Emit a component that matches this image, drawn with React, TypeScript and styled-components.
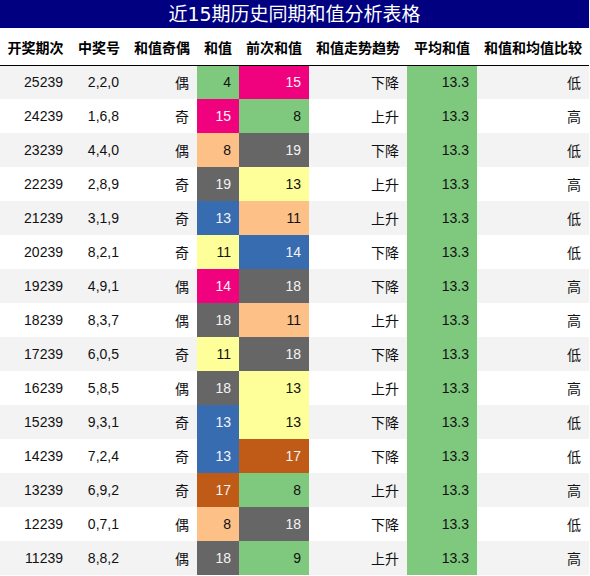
import React from 'react';
import styled, { createGlobalStyle } from 'styled-components';

const palette = {
  green: '#7fc97f',
  pink: '#f0027f',
  peach: '#fdc086',
  yellow: '#ffff99',
  blue: '#386cb0',
  brown: '#bf5b17',
  grey: '#666666',
};

type Tone = keyof typeof palette;

const darkTones: Tone[] = ['pink', 'blue', 'brown', 'grey'];

interface IRow {
  issue: string;
  numbers: string;
  parity: string;
  sum: [number, Tone];
  prev: [number, Tone];
  trend: string;
  level: string;
}

const rows: IRow[] = [
  { issue: '25239', numbers: '2,2,0', parity: '偶', sum: [4, 'green'], prev: [15, 'pink'], trend: '下降', level: '低' },
  { issue: '24239', numbers: '1,6,8', parity: '奇', sum: [15, 'pink'], prev: [8, 'green'], trend: '上升', level: '高' },
  { issue: '23239', numbers: '4,4,0', parity: '偶', sum: [8, 'peach'], prev: [19, 'grey'], trend: '下降', level: '低' },
  { issue: '22239', numbers: '2,8,9', parity: '奇', sum: [19, 'grey'], prev: [13, 'yellow'], trend: '上升', level: '高' },
  { issue: '21239', numbers: '3,1,9', parity: '奇', sum: [13, 'blue'], prev: [11, 'peach'], trend: '上升', level: '低' },
  { issue: '20239', numbers: '8,2,1', parity: '奇', sum: [11, 'yellow'], prev: [14, 'blue'], trend: '下降', level: '低' },
  { issue: '19239', numbers: '4,9,1', parity: '偶', sum: [14, 'pink'], prev: [18, 'grey'], trend: '下降', level: '高' },
  { issue: '18239', numbers: '8,3,7', parity: '偶', sum: [18, 'grey'], prev: [11, 'peach'], trend: '上升', level: '高' },
  { issue: '17239', numbers: '6,0,5', parity: '奇', sum: [11, 'yellow'], prev: [18, 'grey'], trend: '下降', level: '低' },
  { issue: '16239', numbers: '5,8,5', parity: '偶', sum: [18, 'grey'], prev: [13, 'yellow'], trend: '上升', level: '高' },
  { issue: '15239', numbers: '9,3,1', parity: '奇', sum: [13, 'blue'], prev: [13, 'yellow'], trend: '下降', level: '低' },
  { issue: '14239', numbers: '7,2,4', parity: '奇', sum: [13, 'blue'], prev: [17, 'brown'], trend: '下降', level: '低' },
  { issue: '13239', numbers: '6,9,2', parity: '奇', sum: [17, 'brown'], prev: [8, 'green'], trend: '上升', level: '高' },
  { issue: '12239', numbers: '0,7,1', parity: '偶', sum: [8, 'peach'], prev: [18, 'grey'], trend: '下降', level: '低' },
  { issue: '11239', numbers: '8,8,2', parity: '偶', sum: [18, 'grey'], prev: [9, 'green'], trend: '上升', level: '高' },
];

const headers = ['开奖期次', '中奖号', '和值奇偶', '和值', '前次和值', '和值走势趋势', '平均和值', '和值和均值比较'];
const widths = [71, 56, 70, 42, 70, 98, 70, 112];

export default function App() {
  return (
    <Page>
      <GlobalStyle />
      <Title>近15期历史同期和值分析表格</Title>
      <Table>
        <colgroup>
          {widths.map((w, i) => (
            <col key={i} width={w} />
          ))}
        </colgroup>
        <thead>
          <tr>
            {headers.map((h) => (
              <HeadCell key={h}>{h}</HeadCell>
            ))}
          </tr>
        </thead>
        <tbody>
          {rows.map((r, i) => (
            <Row key={r.issue} $striped={i % 2 === 0}>
              <Cell>{r.issue}</Cell>
              <Cell>{r.numbers}</Cell>
              <Cell>{r.parity}</Cell>
              <Cell $tone={r.sum[1]}>{r.sum[0]}</Cell>
              <Cell $tone={r.prev[1]}>{r.prev[0]}</Cell>
              <Cell>{r.trend}</Cell>
              <Cell $tone="green">13.3</Cell>
              <Cell>{r.level}</Cell>
            </Row>
          ))}
        </tbody>
      </Table>
    </Page>
  );
}

const GlobalStyle = createGlobalStyle`
  body {
    margin: 0;
    background: #ffffff;
  }
`;

const Page = styled.div`
  width: 589px;
  font-family: "Liberation Sans", "Noto Sans CJK SC", sans-serif;
`;

const Title = styled.div`
  height: 28px;
  background: #000080;
  color: #ffffff;
  font-size: 19px;
  line-height: 28px;
  text-align: center;
  font-family: "DejaVu Sans", "Noto Sans CJK SC", sans-serif;
`;

const Table = styled.table`
  width: 589px;
  table-layout: fixed;
  border-collapse: collapse;
  border-spacing: 0;
`;

const HeadCell = styled.th`
  height: 37px;
  padding: 1px 7px 0;
  font-size: 14px;
  font-weight: 700;
  color: #000000;
  text-align: center;
  white-space: nowrap;
  border-bottom: 1px solid #000000;
  box-sizing: border-box;
`;

const Row = styled.tr<{ $striped: boolean }>`
  background: ${(p) => (p.$striped ? '#f3f3f3' : '#ffffff')};
`;

const Cell = styled.td<{ $tone?: Tone }>`
  height: 34px;
  padding: 0 8px 0 0;
  font-size: 14px;
  text-align: right;
  white-space: nowrap;
  box-sizing: border-box;
  background: ${(p) => (p.$tone ? palette[p.$tone] : 'transparent')};
  color: ${(p) => (p.$tone && darkTones.includes(p.$tone) ? '#f4f4f4' : '#111111')};
`;
